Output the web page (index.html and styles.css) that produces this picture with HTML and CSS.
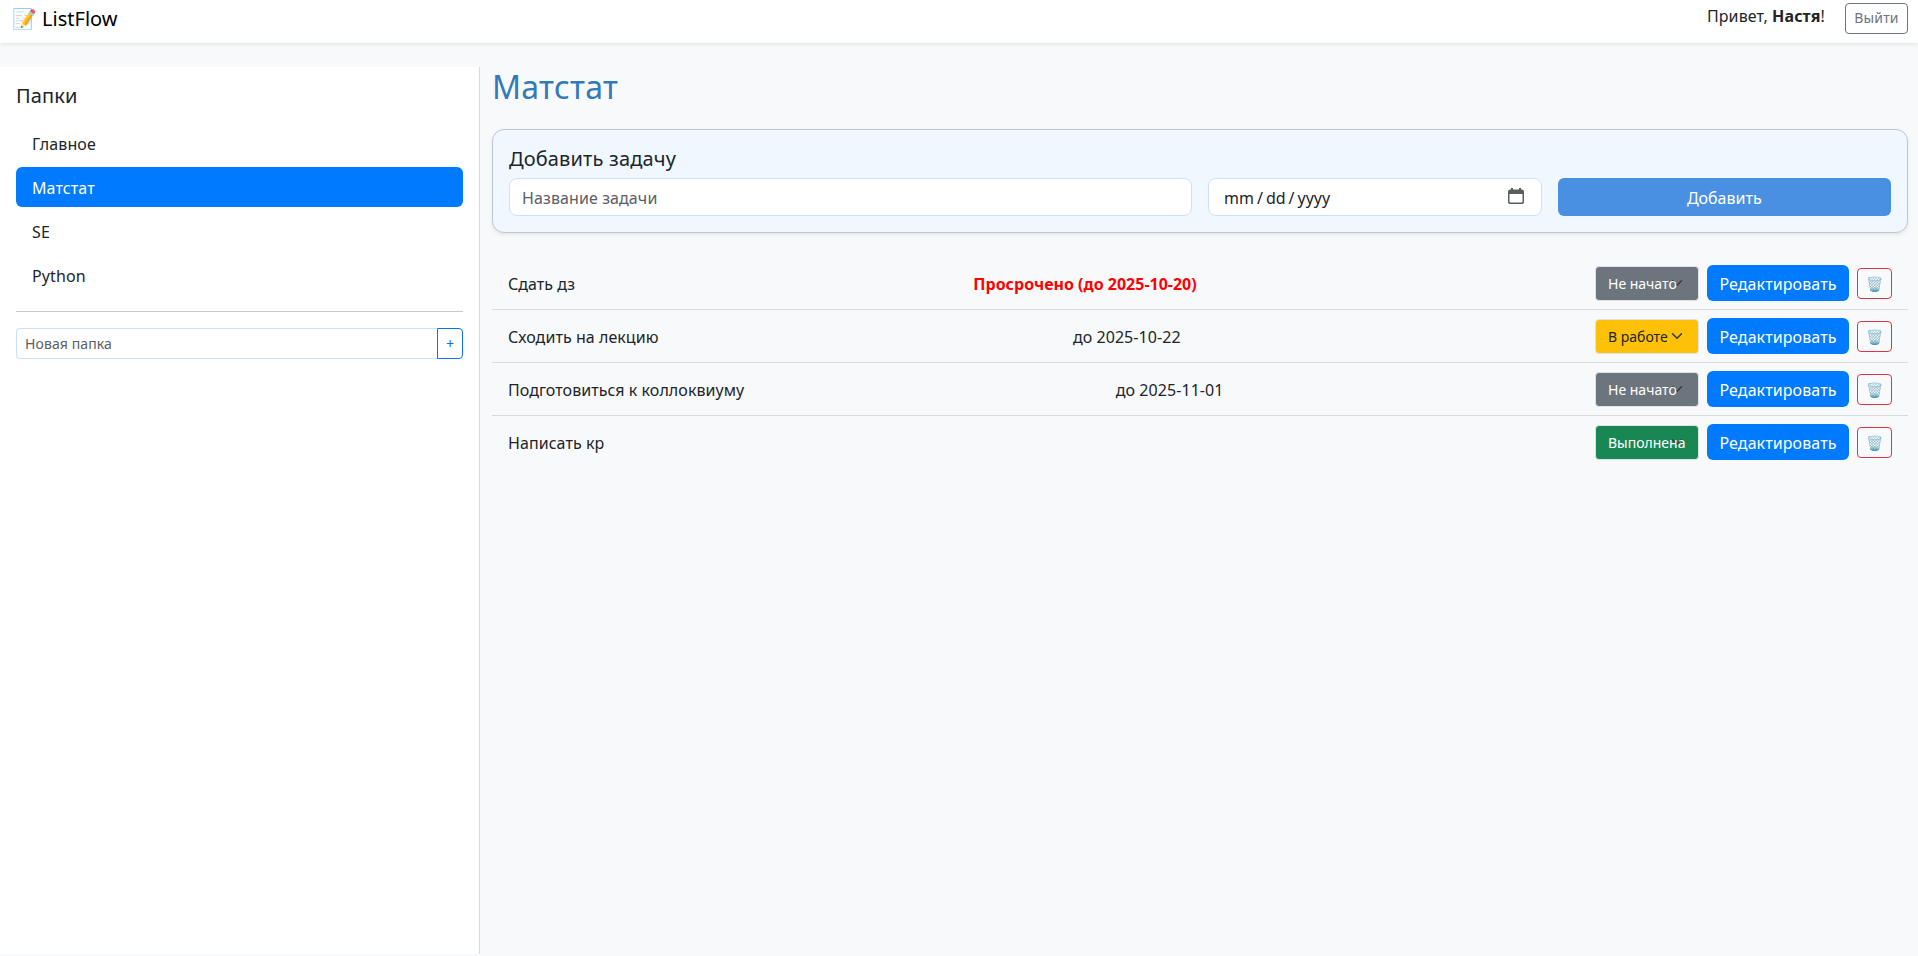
FILE: index.html
```html
<!DOCTYPE html>
<html lang="ru">
<head>
<meta charset="utf-8">
<title>ListFlow</title>
<link rel="stylesheet" href="styles.css">
</head>
<body>
<nav class="navbar">
  <a class="brand"><span class="memo">📝</span> ListFlow</a>
  <div class="user">
    <span class="greeting">Привет, <strong>Настя</strong>!</span>
    <button class="btn-logout">Выйти</button>
  </div>
</nav>
<div class="layout">
  <aside class="sidebar">
    <h5 class="title">Папки</h5>
    <ul class="folders">
      <li class="folder">Главное</li>
      <li class="folder active">Матстат</li>
      <li class="folder">SE</li>
      <li class="folder">Python</li>
    </ul>
    <hr class="divider">
    <form class="new-folder">
      <input class="folder-input" placeholder="Новая папка">
      <button class="btn-plus" type="button">+</button>
    </form>
  </aside>
  <main class="main">
    <h2 class="page-title">Матстат</h2>
    <section class="card">
      <h5 class="title">Добавить задачу</h5>
      <form class="add-form">
        <input class="control" placeholder="Название задачи">
        <div class="control date">
          <span class="date-text"><span>mm</span><span>/</span><span>dd</span><span>/</span><span>yyyy</span></span>
          <svg class="calendar" width="16" height="16" viewBox="0 0 16 16">
            <path fill="#5b5e61" fill-rule="evenodd" d="M3 0h2v1.5h6V0h2v1.5h1a2 2 0 0 1 2 2V14a2 2 0 0 1-2 2H2a2 2 0 0 1-2-2V3.500a2 2 0 0 1 2-2h1zM1.500 6v7.500a1 1 0 0 0 1 1h11a1 1 0 0 0 1-1V6z"/>
          </svg>
        </div>
        <button class="btn-add" type="button">Добавить</button>
      </form>
    </section>
    <ul class="tasks">
      <li class="task">
        <span class="label">Сдать дз</span>
        <span class="label overdue">Просрочено (до 2025-10-20)</span>
        <div class="actions">
          <select class="status todo"><option>Не начато</option></select>
          <button class="btn-edit">Редактировать</button>
          <button class="btn-del">🗑️</button>
        </div>
      </li>
      <li class="task">
        <span class="label">Сходить на лекцию</span>
        <span class="label">до 2025-10-22</span>
        <div class="actions">
          <select class="status doing"><option>В работе</option></select>
          <button class="btn-edit">Редактировать</button>
          <button class="btn-del">🗑️</button>
        </div>
      </li>
      <li class="task">
        <span class="label">Подготовиться к коллоквиуму</span>
        <span class="label">до 2025-11-01</span>
        <div class="actions">
          <select class="status todo"><option>Не начато</option></select>
          <button class="btn-edit">Редактировать</button>
          <button class="btn-del">🗑️</button>
        </div>
      </li>
      <li class="task">
        <span class="label">Написать кр</span>
        <div class="actions">
          <select class="status done"><option>Выполнена</option></select>
          <button class="btn-edit">Редактировать</button>
          <button class="btn-del">🗑️</button>
        </div>
      </li>
    </ul>
  </main>
</div>
</body>
</html>
```
FILE: styles.css
```css
*, *::before, *::after { box-sizing: border-box; }
body {
  margin: 0;
  background: #f8f9fb;
  color: #212529;
  font: 16px/1.5 "Noto Sans", "Noto Color Emoji", sans-serif;
}
button, input, select { font-family: inherit; margin: 0; }
ul { list-style: none; margin: 0; padding: 0; }
.navbar {
  height: 43px;
  padding: 3px 10px 0 12px;
  display: flex;
  justify-content: space-between;
  align-items: flex-start;
  background: #fff;
  box-shadow: 0 2px 4px rgba(0, 0, 0, .075);
}
.brand { font-size: 20px; line-height: 30px; color: #000; padding-top: 1px; }
.user { display: flex; align-items: flex-start; gap: 20px; }
.greeting { line-height: 24px; margin-top: 1px; letter-spacing: .1px; }
.btn-logout {
  width: 63px;
  height: 31px;
  padding: 3px 0 5px;
  font-size: 14px;
  line-height: 21px;
  letter-spacing: .15px;
  color: #6c757d;
  background: transparent;
  border: 1px solid #6c757d;
  border-radius: 4px;
}
.layout { display: flex; padding-top: 24px; }
.sidebar {
  width: 480px;
  height: 887px;
  padding: 16px;
  background: #fff;
  border-right: 1px solid #d9d9d9;
}
.title { margin: 0 0 7px; padding-top: 1px; font-size: 20px; line-height: 24px; font-weight: 400; letter-spacing: .15px; }
.sidebar .title { margin-bottom: 15px; }
.folder { height: 40px; padding: 9px 16px 7px; margin-bottom: 4px; border-radius: 6px; letter-spacing: .1px; }
.folder.active { background: #007bff; color: #fff; }
.divider { margin: 16px 0; border: 0; border-top: 1px solid #c8c9ca; }
.new-folder { display: flex; }
.folder-input {
  flex: 1;
  min-width: 0;
  height: 31px;
  padding: 4px 8px;
  font-size: 14px;
  line-height: 21px;
  letter-spacing: .1px;
  border: 1px solid #cce0ff;
  border-right: 0;
  border-radius: 4px 0 0 4px;
}
::placeholder { color: #5a6065; opacity: 1; }
.btn-plus {
  width: 26px;
  height: 31px;
  padding: 0;
  font-size: 14px;
  color: #0d6efd;
  background: transparent;
  border: 1px solid #0d6efd;
  border-radius: 0 4px 4px 0;
}
.main { flex: 1; padding: 0 10px 0 12px; }
.page-title {
  margin: 0 0 23px;
  padding-top: 1px;
  font-size: 32px;
  line-height: 38px;
  font-weight: 400;
  letter-spacing: .3px;
  color: #337ab7;
}
.card {
  padding: 16px;
  margin-bottom: 24px;
  background: #f0f7ff;
  border: 1px solid #c0c7cf;
  border-radius: 12px;
  box-shadow: 0 2px 4px rgba(0, 0, 0, .075);
}
.add-form { display: grid; grid-template-columns: 683px 1fr 1fr; gap: 16px; }
.control {
  height: 38px;
  padding: 7px 12px 5px;
  font-size: 16px;
  line-height: 24px;
  letter-spacing: .1px;
  color: #212529;
  background: #fff;
  border: 1px solid #cce0ff;
  border-radius: 8px;
}
.date { display: flex; justify-content: space-between; padding: 7px 17px 5px 15px; }
.date-text { display: flex; gap: 3px; letter-spacing: 0; }
.calendar { margin-top: 2px; }
.btn-add {
  height: 38px;
  padding: 2px 0 0;
  font-size: 16px;
  color: #fff;
  background: #4a90e2;
  border: 0;
  border-radius: 6px;
}
.task {
  height: 53px;
  padding: 8px 16px;
  display: flex;
  justify-content: space-between;
  align-items: center;
  border-bottom: 1px solid #d9dcdf;
}
.task:last-child { border-color: transparent; }
.label { padding-top: 2px; letter-spacing: .06px; }
.overdue { color: #f00; font-weight: 700; letter-spacing: 0; }
.actions { display: flex; align-items: center; gap: 8px; }
.status {
  appearance: none;
  width: 104px;
  height: 35px;
  padding: 4px 8px 4px 12px;
  font-size: 14px;
  line-height: 21px;
  border: 1px solid #dee2e6;
  border-radius: 4px;
  color: #fff;
  background: no-repeat right 13px center / 16px 12px url("data:image/svg+xml,%3Csvg xmlns='http://www.w3.org/2000/svg' viewBox='0 0 16 16'%3E%3Cpath fill='none' stroke='%23343a40' stroke-linecap='round' stroke-linejoin='round' stroke-width='2' d='m2 5 6 6 6-6'/%3E%3C/svg%3E");
}
.todo { background-color: #6c757d; }
.doing { background-color: #ffc107; color: #212529; }
.done { background-color: #198754; }
.btn-edit {
  width: 142px;
  height: 36px;
  padding: 7px 0 5px;
  font-size: 16px;
  line-height: 24px;
  letter-spacing: .1px;
  color: #fff;
  background: #007bff;
  border: 0;
  border-radius: 6px;
}
.btn-del {
  width: 35px;
  height: 31px;
  padding: 4px 8px;
  font-size: 14px;
  line-height: 21px;
  background: transparent;
  border: 1px solid #dc3545;
  border-radius: 4px;
}
```
